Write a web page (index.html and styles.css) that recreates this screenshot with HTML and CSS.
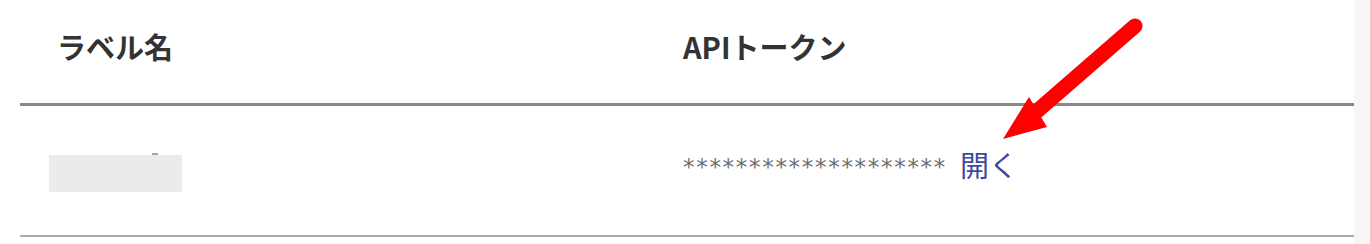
FILE: index.html
```html
<!DOCTYPE html>
<html lang="ja">
<head>
    <meta charset="UTF-8">
    <meta name="viewport" content="width=device-width, initial-scale=1.0">
    <title>APIトークン</title>
    <link rel="stylesheet" href="styles.css">
</head>
<body>
    <!-- トークン一覧 -->
    <div class="page">
        <div class="token-table">
            <div class="row head">
                <div class="cell">ラベル名</div>
                <div class="cell">APIトークン</div>
            </div>
            <div class="row body-row">
                <div class="cell">
                    <span class="masked-label"></span>
                </div>
                <div class="cell token">
                    <span class="stars">********************</span>
                    <a class="open-link">開く</a>
                </div>
            </div>
        </div>
    </div>
    <div class="side"></div>

    <!-- 注釈の矢印 -->
    <svg class="arrow" width="1370" height="244" viewBox="0 0 1370 244">
        <line x1="1135" y1="26" x2="1036" y2="112" stroke="#ff0000" stroke-width="15" stroke-linecap="round"/>
        <polygon points="1003,139 1029,97 1047,127" fill="#ff0000"/>
    </svg>
</body>
</html>
```

FILE: styles.css
```css
/* ベース */
body {
    margin: 0;
    height: 244px;
    display: flex;
    background-color: #ffffff;
    font-family: "Noto Sans CJK JP", "Noto Sans", sans-serif;
    color: #333333;
    overflow: hidden;
}
.page {
    flex: 1;
    padding-left: 20px;
}
.side {
    width: 16px;
    background-color: #f8f7f6;
}

/* テーブル */
.row {
    display: grid;
    grid-template-columns: 626px 1fr;
    align-items: center;
}
.cell {
    padding-left: 37px;
}
.head {
    box-sizing: border-box;
    height: 106px;
    padding-bottom: 12px;
    border-bottom: 3px solid #888888;
    font-size: 29px;
    font-weight: bold;
    color: #333333;
}
.body-row {
    height: 131px;
    box-sizing: border-box;
    border-bottom: 2px solid #aaaaaa;
}
.masked-label {
    position: relative;
    display: block;
    margin-left: -8px;
    margin-top: 6px;
    width: 133px;
    height: 37px;
    background-color: #ebebeb;
}
.masked-label::before {
    content: "";
    position: absolute;
    left: 103px;
    top: -2px;
    width: 6px;
    height: 2px;
    background-color: #a8a8a8;
}
.token {
    display: flex;
    align-items: center;
    margin-top: -14px;
}
.stars {
    font-family: "DejaVu Sans", sans-serif;
    font-size: 23px;
    letter-spacing: 1.7px;
    color: #6f6f6f;
    margin-top: 6px;
}
.open-link {
    margin-left: 13px;
    font-size: 29px;
    color: #3d48a0;
    cursor: pointer;
}

/* 矢印 */
.arrow {
    position: absolute;
    left: 0;
    top: 0;
    pointer-events: none;
}
```
